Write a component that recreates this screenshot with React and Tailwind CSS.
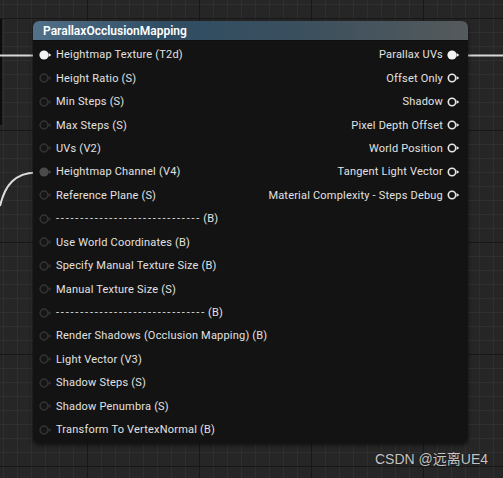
import React from "react";

const leftPins = [
  { label: "Heightmap Texture (T2d)", state: "on" },
  { label: "Height Ratio (S)" },
  { label: "Min Steps (S)" },
  { label: "Max Steps (S)" },
  { label: "UVs (V2)" },
  { label: "Heightmap Channel (V4)", state: "gray" },
  { label: "Reference Plane (S)" },
  { label: "(B)", dashes: "------------------------------" },
  { label: "Use World Coordinates (B)" },
  { label: "Specify Manual Texture Size (B)" },
  { label: "Manual Texture Size (S)" },
  { label: "(B)", dashes: "-------------------------------" },
  { label: "Render Shadows (Occlusion Mapping) (B)" },
  { label: "Light Vector (V3)" },
  { label: "Shadow Steps (S)" },
  { label: "Shadow Penumbra (S)" },
  { label: "Transform To VertexNormal (B)" },
];

const rightPins = [
  { label: "Parallax UVs", state: "on" },
  { label: "Offset Only" },
  { label: "Shadow" },
  { label: "Pixel Depth Offset" },
  { label: "World Position" },
  { label: "Tangent Light Vector" },
  { label: "Material Complexity - Steps Debug" },
];

function Pin({ state, side }) {
  let circle;
  let arrow;
  if (state === "on") {
    circle = <circle cx="5" cy="5" r="4.6" fill="#f2f2f2" />;
    arrow = "#f2f2f2";
  } else if (state === "gray") {
    circle = <circle cx="5" cy="5" r="4.6" fill="#4b4b4b" />;
    arrow = "#4b4b4b";
  } else if (side === "right") {
    circle = <circle cx="5" cy="5" r="3.7" fill="#141414" stroke="#e6e6e6" strokeWidth="1.6" />;
    arrow = "#e6e6e6";
  } else {
    circle = <circle cx="5" cy="5" r="3.9" fill="#161616" stroke="#343434" strokeWidth="1.5" />;
    arrow = "#343434";
  }
  return (
    <svg width="13" height="10" viewBox="0 0 13 10" className="shrink-0">
      {circle}
      <polygon points="9.6,3 12.3,5 9.6,7" fill={arrow} />
    </svg>
  );
}

export default function App() {
  return (
    <div
      className="relative w-[503px] h-[478px] overflow-hidden bg-[#262626] bg-[linear-gradient(#181818_1px,transparent_1px),linear-gradient(90deg,#181818_1px,transparent_1px),linear-gradient(#2f2f2f_1px,transparent_1px),linear-gradient(90deg,#2f2f2f_1px,transparent_1px)] bg-[size:112px_112px,112px_112px,14px_14px,14px_14px] bg-[position:87px_18px,87px_18px,3px_4px,3px_4px]"
      style={{ fontFamily: "Roboto, 'Noto Sans', sans-serif" }}
    >
      {/* edge of another node */}
      <div className="absolute left-0 top-[19px] w-[2px] h-[106px] bg-[#0c0c0c]" />

      {/* wires */}
      <svg className="absolute left-0 top-0" width="503" height="478">
        <line x1="0" y1="55.5" x2="40" y2="55.5" stroke="#d8d8d8" strokeWidth="2" />
        <line x1="458" y1="55.5" x2="503" y2="55.5" stroke="#d8d8d8" strokeWidth="2" />
        <path d="M0 206 C 5 185, 15 173, 36 172.5 L 42 172.5" fill="none" stroke="#dcdcdc" strokeWidth="2" />
      </svg>

      {/* node */}
      <div className="absolute left-[33px] top-[21px] w-[435px] h-[422px] rounded-[6px] bg-[#121312] shadow-[0_2px_4px_rgba(0,0,0,0.6)] flex flex-col">
        <div className="h-[20px] rounded-t-[6px] bg-[linear-gradient(90deg,#52718a_0%,#2f4d63_30%,#3a4f5e_60%,#555a5c_100%)] flex items-center pl-[10px] border-b border-[#0e0e0e]">
          <span className="text-[12px] font-semibold text-white leading-none">
            ParallaxOcclusionMapping
          </span>
        </div>
        <div className="flex justify-between pt-[2px]">
          <div className="flex flex-col">
            {leftPins.map((p, i) => (
              <div key={i} className="h-[23.45px] flex items-center pl-[6px] gap-[4px]">
                <Pin state={p.state} side="left" />
                <span className="text-[11px] text-[#e2e2e2] leading-none whitespace-nowrap tracking-[0.2px]">
                  {p.dashes ? (
                    <span className="tracking-[1.8px] mr-[2px]">{p.dashes}</span>
                  ) : null}
                  {p.label}
                </span>
              </div>
            ))}
          </div>
          <div className="flex flex-col items-end">
            {rightPins.map((p, i) => (
              <div key={i} className="h-[23.45px] flex items-center pr-[8px] gap-[4px]">
                <span className="text-[11px] text-[#e2e2e2] leading-none whitespace-nowrap tracking-[0.2px]">{p.label}</span>
                <Pin state={p.state} side="right" />
              </div>
            ))}
          </div>
        </div>
      </div>

      {/* watermark */}
      <div
        className="absolute left-[375px] top-[452px] text-[14px] text-[#c4c4c4] leading-none [text-shadow:0_0_2px_rgba(0,0,0,0.6)]"
        style={{ fontFamily: "'Liberation Sans', 'Noto Sans CJK SC', sans-serif" }}
      >
        CSDN @远离UE4
      </div>
    </div>
  );
}
